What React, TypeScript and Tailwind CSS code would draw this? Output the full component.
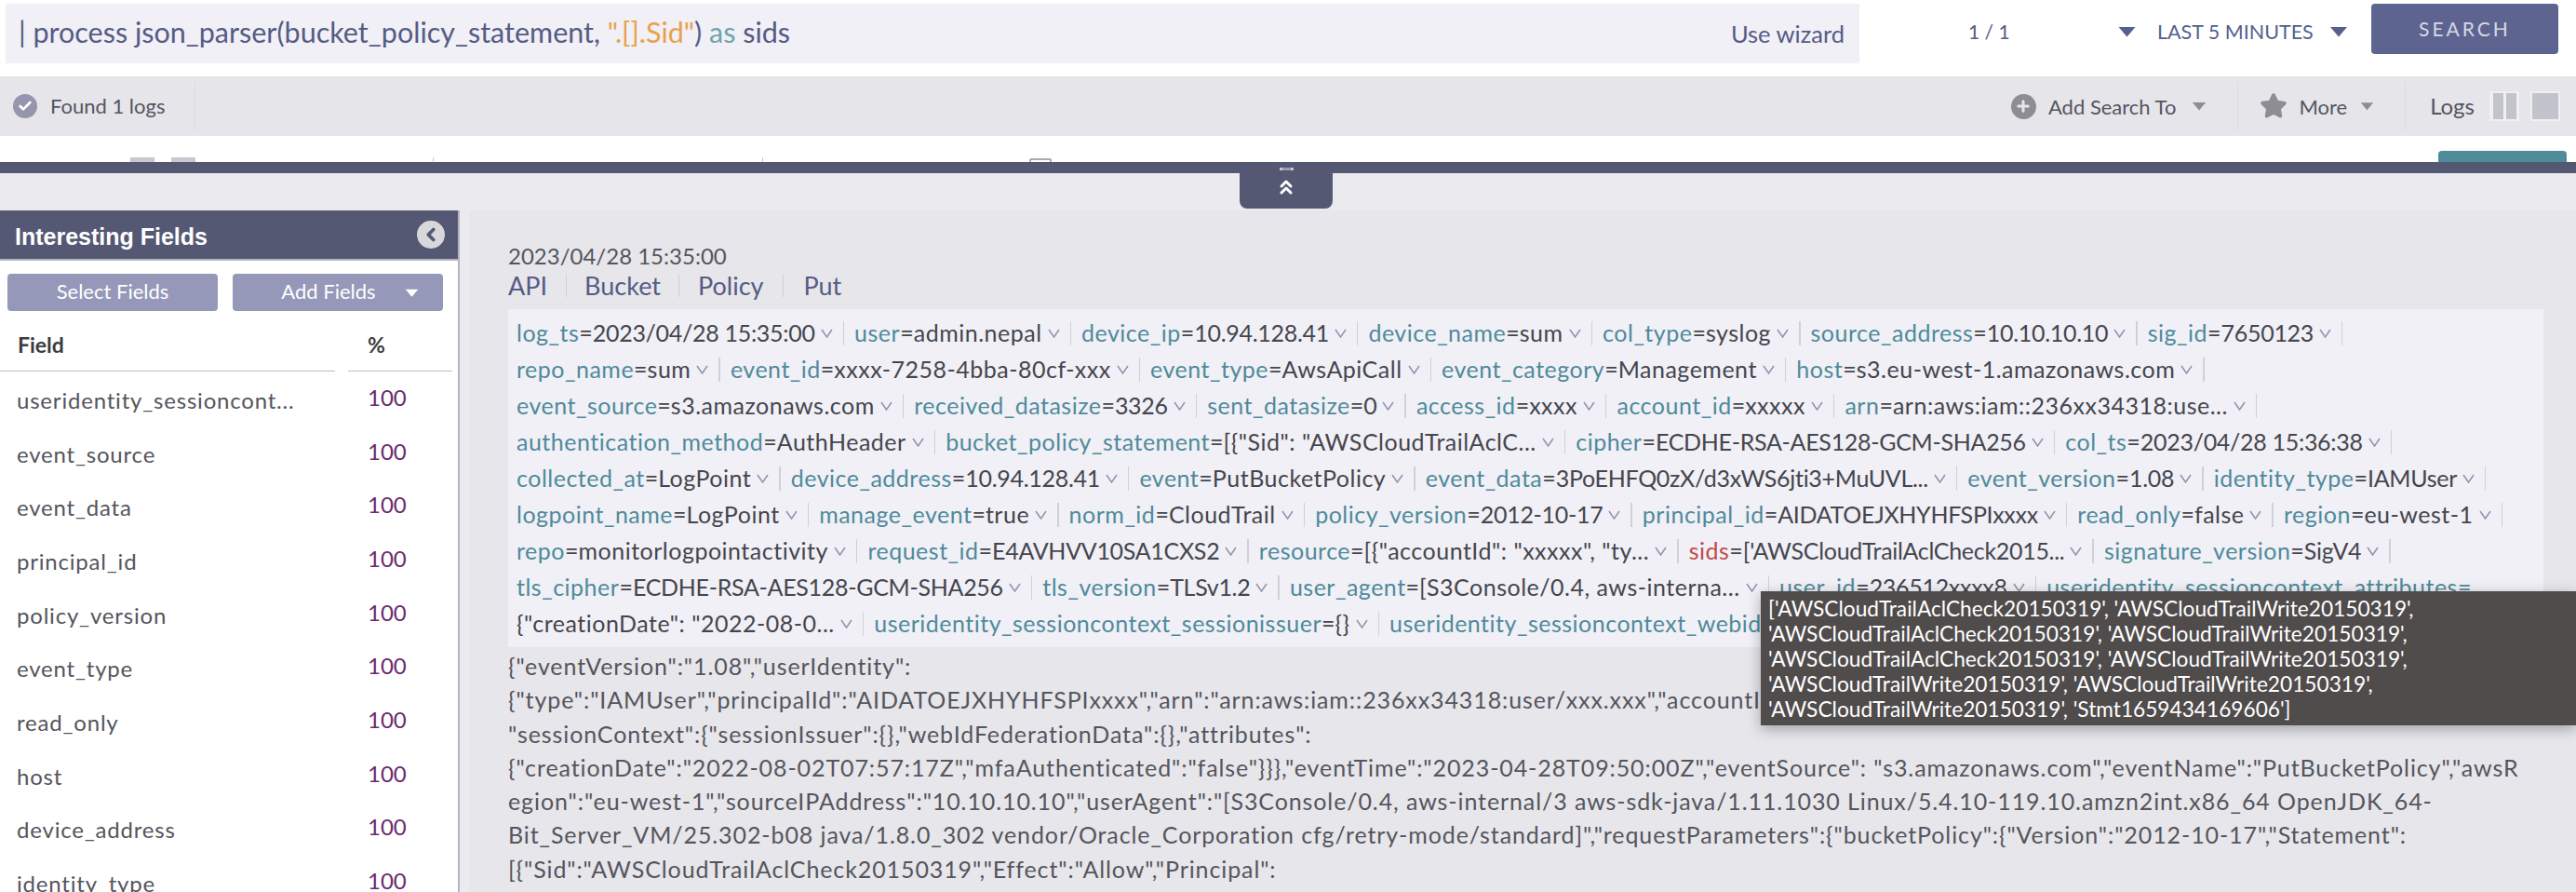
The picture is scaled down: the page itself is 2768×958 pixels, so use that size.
import { ChevronLeft, ChevronsUp, Check, Plus, Star } from "lucide-react";

type Pair = { k?: string; v: string; red?: boolean };

const rows: Pair[][] = [
  [
    { k: "log_ts", v: "2023/04/28 15:35:00" },
    { k: "user", v: "admin.nepal" },
    { k: "device_ip", v: "10.94.128.41" },
    { k: "device_name", v: "sum" },
    { k: "col_type", v: "syslog" },
    { k: "source_address", v: "10.10.10.10" },
    { k: "sig_id", v: "7650123" },
  ],
  [
    { k: "repo_name", v: "sum" },
    { k: "event_id", v: "xxxx-7258-4bba-80cf-xxx" },
    { k: "event_type", v: "AwsApiCall" },
    { k: "event_category", v: "Management" },
    { k: "host", v: "s3.eu-west-1.amazonaws.com" },
  ],
  [
    { k: "event_source", v: "s3.amazonaws.com" },
    { k: "received_datasize", v: "3326" },
    { k: "sent_datasize", v: "0" },
    { k: "access_id", v: "xxxx" },
    { k: "account_id", v: "xxxxx" },
    { k: "arn", v: "arn:aws:iam::236xx34318:use..." },
  ],
  [
    { k: "authentication_method", v: "AuthHeader" },
    { k: "bucket_policy_statement", v: '[{"Sid": "AWSCloudTrailAclC...' },
    { k: "cipher", v: "ECDHE-RSA-AES128-GCM-SHA256" },
    { k: "col_ts", v: "2023/04/28 15:36:38" },
  ],
  [
    { k: "collected_at", v: "LogPoint" },
    { k: "device_address", v: "10.94.128.41" },
    { k: "event", v: "PutBucketPolicy" },
    { k: "event_data", v: "3PoEHFQ0zX/d3xWS6jti3+MuUVL..." },
    { k: "event_version", v: "1.08" },
    { k: "identity_type", v: "IAMUser" },
  ],
  [
    { k: "logpoint_name", v: "LogPoint" },
    { k: "manage_event", v: "true" },
    { k: "norm_id", v: "CloudTrail" },
    { k: "policy_version", v: "2012-10-17" },
    { k: "principal_id", v: "AIDATOEJXHYHFSPIxxxx" },
    { k: "read_only", v: "false" },
    { k: "region", v: "eu-west-1" },
  ],
  [
    { k: "repo", v: "monitorlogpointactivity" },
    { k: "request_id", v: "E4AVHVV10SA1CXS2" },
    { k: "resource", v: '[{"accountId": "xxxxx", "ty...' },
    { k: "sids", v: "['AWSCloudTrailAclCheck2015...", red: true },
    { k: "signature_version", v: "SigV4" },
  ],
  [
    { k: "tls_cipher", v: "ECDHE-RSA-AES128-GCM-SHA256" },
    { k: "tls_version", v: "TLSv1.2" },
    { k: "user_agent", v: "[S3Console/0.4, aws-interna..." },
    { k: "user_id", v: "236512xxxx8" },
  ],
  [
    { v: '{"creationDate": "2022-08-0...' },
    { k: "useridentity_sessioncontext_sessionissuer", v: "{}" },
    { k: "useridentity_sessioncontext_webidfederationdata", v: "{}" },
  ],
];

const rawLines = [
  '{"eventVersion":"1.08","userIdentity":',
  '{"type":"IAMUser","principalId":"AIDATOEJXHYHFSPIxxxx","arn":"arn:aws:iam::236xx34318:user/xxx.xxx","accountId":"236512xxxx8"',
  '"sessionContext":{"sessionIssuer":{},"webIdFederationData":{},"attributes":',
  '{"creationDate":"2022-08-02T07:57:17Z","mfaAuthenticated":"false"}}},"eventTime":"2023-04-28T09:50:00Z","eventSource": "s3.amazonaws.com","eventName":"PutBucketPolicy","awsR',
  'egion":"eu-west-1","sourceIPAddress":"10.10.10.10","userAgent":"[S3Console/0.4, aws-internal/3 aws-sdk-java/1.11.1030 Linux/5.4.10-119.10.amzn2int.x86_64 OpenJDK_64-',
  'Bit_Server_VM/25.302-b08 java/1.8.0_302 vendor/Oracle_Corporation cfg/retry-mode/standard]","requestParameters":{"bucketPolicy":{"Version":"2012-10-17","Statement":',
  '[{"Sid":"AWSCloudTrailAclCheck20150319","Effect":"Allow","Principal":',
];

const fields = [
  "useridentity_sessioncont...",
  "event_source",
  "event_data",
  "principal_id",
  "policy_version",
  "event_type",
  "read_only",
  "host",
  "device_address",
  "identity_type",
];

const tooltipLines = [
  "['AWSCloudTrailAclCheck20150319', 'AWSCloudTrailWrite20150319',",
  "'AWSCloudTrailAclCheck20150319', 'AWSCloudTrailWrite20150319',",
  "'AWSCloudTrailAclCheck20150319', 'AWSCloudTrailWrite20150319',",
  "'AWSCloudTrailWrite20150319', 'AWSCloudTrailWrite20150319',",
  "'AWSCloudTrailWrite20150319', 'Stmt1659434169606']",
];

function isTight(value: string): boolean {
  const tight = value.match(/[0-9A-Z]/g)?.length ?? 0;
  return tight / value.length >= 0.35;
}

function Triangle({ className }: { className: string }) {
  return (
    <svg viewBox="0 0 20 12" className={className} fill="currentColor">
      <path d="M1 1h18L10 11.5z" />
    </svg>
  );
}

function PairRow({ row, extra }: { row: Pair[]; extra?: boolean }) {
  return (
    <div className="flex h-[39px] items-center whitespace-pre text-[25px]">
      {row.map((p) => (
        <div key={p.k ?? p.v} className="flex items-center">
          <span>
            {p.k && <span className={`tracking-[0.5px] ${p.red ? "text-[#c04a45]" : "text-[#4f8a9a]"}`}>{p.k}</span>}
            {p.k && <span className="text-[#45454d]">=</span>}
            <span className={`text-[#45454d] ${isTight(p.v) ? "tracking-[-0.3px]" : "tracking-[0.5px]"}`}>{p.v}</span>
          </span>
          <svg viewBox="0 0 13 10" className="ml-[6px] h-[10px] w-[13px] text-[#8f93ad]" fill="none" stroke="currentColor" strokeWidth="1.5">
            <path d="M1 1l5.5 8L12 1" />
          </svg>
          <div className="mx-[11px] h-[26px] w-[1.5px] bg-[#d0d0da]" />
        </div>
      ))}
      {extra && <span className="tracking-[0.5px] text-[#4f8a9a]">useridentity_sessioncontext_attributes=</span>}
    </div>
  );
}

export default function App() {
  return (
    <div className="relative h-[958px] w-[2768px] overflow-hidden bg-white font-['Lato',sans-serif]">
      {/* search bar */}
      <div className="flex h-[68px] items-start pt-[4px] pl-[6px]">
        <div className="flex h-[64px] w-[1992px] items-center justify-between bg-[#f0f0f6] pr-[16px] pl-[14px] text-[30.5px] text-[#565b84]">
          <span className="whitespace-pre pb-[2px]">
            | process json_parser(bucket_policy_statement, <span className="text-[#e8a24a]">".[].Sid"</span>){" "}
            <span className="text-[#6fa5ad]">as</span> sids
          </span>
          <span className="text-[25.5px]">Use wizard</span>
        </div>
        <span className="ml-[117px] w-[43px] pt-[14px] text-[21px] whitespace-pre text-[#565b84]">1 / 1</span>
        <Triangle className="ml-[117px] mt-[24px] h-[12px] w-[21px] text-[#565f8d]" />
        <span className="ml-[22px] w-[165px] pt-[14px] text-[21.5px] whitespace-pre text-[#565f8d]">LAST 5 MINUTES</span>
        <Triangle className="ml-[20px] mt-[24px] h-[12px] w-[20px] text-[#565f8d]" />
        <button className="ml-[25px] h-[54px] w-[201px] rounded-[4px] bg-[#5d6490] text-[21px] tracking-[3px] text-[#d6d8e6]">
          SEARCH
        </button>
      </div>

      {/* results bar */}
      <div className="mt-[14px] flex h-[64px] items-center bg-[#e5e5ea] pl-[14px] text-[22px] text-[#55555f]">
        <div className="flex h-[26px] w-[26px] items-center justify-center rounded-full bg-[#9596ad]">
          <Check className="h-[16px] w-[16px] text-white" strokeWidth={4} />
        </div>
        <span className="ml-[14px] pb-[2px]">Found 1 logs</span>
        <div className="ml-[32px] h-[52px] w-px bg-[#dcdce2]" />
        <div className="ml-auto flex items-center">
          <div className="flex h-[27px] w-[27px] items-center justify-center rounded-full bg-[#8d8d93]">
            <Plus className="h-[18px] w-[18px] text-[#e5e5ea]" strokeWidth={4} />
          </div>
          <span className="ml-[13px]">Add Search To</span>
          <Triangle className="ml-[17px] h-[10px] w-[16px] text-[#8d8d93]" />
          <div className="ml-[33px] h-[52px] w-px bg-[#dcdce2]" />
          <Star className="ml-[23px] h-[30px] w-[30px] fill-[#8d8d93] text-[#8d8d93]" />
          <span className="ml-[12px]">More</span>
          <Triangle className="ml-[14px] h-[10px] w-[15px] text-[#8d8d93]" />
          <div className="ml-[33px] h-[52px] w-px bg-[#dcdce2]" />
          <span className="ml-[26px] text-[24px]">Logs</span>
          <div className="ml-[16px] flex h-[32px] w-[32px] items-center justify-center gap-[3px] bg-[#f0f0f3]">
            <div className="h-[28px] w-[11px] bg-[#c3c3cb]" />
            <div className="h-[28px] w-[11px] bg-[#c3c3cb]" />
          </div>
          <div className="mr-[17px] ml-[12px] flex h-[32px] w-[32px] items-center justify-center bg-[#f0f0f3]">
            <div className="h-[28px] w-[28px] bg-[#c3c3cb]" />
          </div>
        </div>
      </div>

      {/* histogram row, cut off by the drawer */}
      <div className="flex h-[28px] items-start overflow-hidden pt-[20px] text-[22px] text-[#555]">
        <span className="ml-[15px] w-[125px]">Histogram</span>
        <div className="mt-[3px] h-[28px] w-[26px] bg-[#c8c8d0]" />
        <div className="mt-[3px] ml-[18px] h-[28px] w-[26px] bg-[#c8c8d0]" />
        <span className="ml-[30px] w-[225px] whitespace-pre">Interval: 10 seconds</span>
        <div className="mt-[3px] h-[28px] w-px bg-[#c8c8d0]" />
        <span className="ml-[24px] w-[329px] whitespace-pre">Attempt: Count: stats</span>
        <div className="mt-[3px] h-[28px] w-px bg-[#c8c8d0]" />
        <span className="ml-[16px] w-[270px] whitespace-pre">Show/Hide Trendline</span>
        <div className="mt-[4px] h-[24px] w-[24px] rounded-[2px] border-2 border-[#aaa]" />
        <div className="mt-[-4px] mr-[10px] ml-auto h-[40px] w-[138px] rounded-[4px] bg-[#4f8c99] pt-[4px] text-center text-white">
          Select
        </div>
      </div>

      {/* drawer handle */}
      <div className="relative h-[12px] bg-[#555873]">
        <div className="absolute top-0 left-[1332px] flex h-[50px] w-[100px] flex-col items-center rounded-b-[8px] bg-[#555873]">
          <div className="mt-[6px] h-[3px] w-[15px] border-x-[3px] border-dotted border-[#c8c8d4] bg-[#9a9cb0]" />
          <ChevronsUp className="mt-[6px] h-[24px] w-[24px] text-white" strokeWidth={3} />
        </div>
      </div>

      <div className="h-[40px] bg-[#ebebef]" />

      <div className="flex h-[732px] bg-[#ebebef]">
        {/* interesting fields */}
        <div className="h-full w-[494px] shrink-0 border-r-2 border-[#b4b4c2] bg-white">
          <div className="flex h-[54px] items-center justify-between border-b-2 border-[#b4b4c2] bg-[#555873] pr-[14px] pl-[16px] font-['Liberation_Sans',sans-serif] text-[25px] font-bold text-white">
            <span className="pt-[5px]">Interesting Fields</span>
            <div className="flex h-[30px] w-[30px] items-center justify-center rounded-full bg-[#d8d8dc]">
              <ChevronLeft className="h-[22px] w-[22px] text-[#555873]" strokeWidth={4} />
            </div>
          </div>
          <div className="mt-[14px] flex gap-[16px] pl-[8px] text-[22px] text-white">
            <div className="flex h-[40px] w-[226px] items-center justify-center rounded-[4px] bg-[#9598b8] pb-[3px]">Select Fields</div>
            <div className="relative flex h-[40px] w-[226px] items-center justify-center rounded-[4px] bg-[#9598b8] pr-[20px] pb-[3px]">
              Add Fields
              <Triangle className="absolute right-[26px] top-[16px] h-[9px] w-[15px] text-white" />
            </div>
          </div>
          <div className="mt-[17px] flex h-[48px] text-[23px] font-bold text-[#3c3c40]">
            <div className="w-[360px] border-b-[1px] border-[#bcbcc6] pt-[2px] pl-[19px]">Field</div>
            <div className="ml-[14px] w-[112px] border-b-[1px] border-[#bcbcc6] pt-[2px] pl-[21px]">%</div>
          </div>
          <div className="mt-[2px]">
            {fields.map((name) => (
              <div key={name} className="flex h-[57.7px] items-center text-[24px]">
                <span className="w-[395px] whitespace-pre pl-[18px] tracking-[0.8px] text-[#55555c]">{name}</span>
                <span className="pb-[6px] text-[#6b2a6f]">100</span>
              </div>
            ))}
          </div>
        </div>

        {/* log detail */}
        <div className="ml-[10px] flex-1 bg-[#e6e6eb] pt-[34px] pl-[42px]">
          <div className="text-[24px] leading-[30px] text-[#55555c]">2023/04/28 15:35:00</div>
          <div className="flex h-[34px] items-center text-[27px] text-[#565b84]">
            <span>API</span>
            <div className="mx-[19.5px] h-[24px] w-px bg-[#cfcfd8]" />
            <span>Bucket</span>
            <div className="mx-[19.5px] h-[24px] w-px bg-[#cfcfd8]" />
            <span>Policy</span>
            <div className="mx-[21px] h-[24px] w-px bg-[#cfcfd8]" />
            <span>Put</span>
          </div>
          <div className="mt-[8px] h-[363px] w-[2187px] overflow-hidden bg-[#f0f0f6] pt-[6px] pl-[9px]">
            {rows.map((row, i) => (
              <PairRow key={i} row={row} extra={i === 7} />
            ))}
          </div>
          <div className="mt-[2px]">
            {rawLines.map((line) => (
              <div key={line} className="h-[36.3px] whitespace-pre text-[25px] leading-[36px] tracking-[0.9px] text-[#55555c]">
                {line}
              </div>
            ))}
          </div>
        </div>
      </div>

      {/* hover tooltip on sids */}
      <div className="absolute top-[635px] left-[1892px] h-[144px] w-[876px] bg-[#504c4c] pt-[5px] pl-[8px] text-[22.7px] leading-[27px] whitespace-pre text-white shadow-[0_4px_14px_rgba(0,0,0,0.3)]">
        {tooltipLines.map((line) => (
          <div key={line}>{line}</div>
        ))}
      </div>
    </div>
  );
}
